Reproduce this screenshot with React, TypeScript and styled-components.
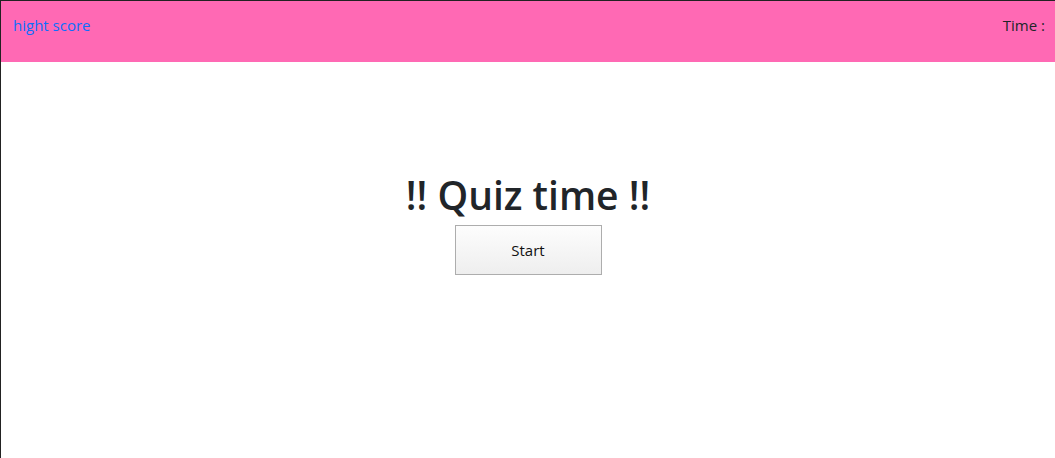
import React from "react";
import styled, { createGlobalStyle } from "styled-components";

const Global = createGlobalStyle`
  html, body { margin: 0; padding: 0; background: #fff; }
  body { font-family: "Open Sans", "Noto Sans", sans-serif; color: #212529; }
`;

const Frame = styled.div`
  width: 1055px;
  height: 458px;
  box-sizing: border-box;
  border-top: 1px solid #222;
  border-left: 1px solid #222;
  display: flex;
  flex-direction: column;
  overflow: hidden;
`;

const Header = styled.header`
  height: 61px;
  background: #ff69b4;
  display: flex;
  align-items: center;
  justify-content: space-between;
  padding: 0 10px 0 12px;
  box-sizing: border-box;
  font-size: 15px;
`;

const HighScore = styled.a`
  color: #0d6efd;
  text-decoration: none;
  margin-top: -14px;
`;

const Timer = styled.span`
  color: #212529;
  margin-top: -14px;
`;

const Main = styled.main`
  display: flex;
  flex-direction: column;
  align-items: center;
  padding-top: 106px;
`;

const Title = styled.h1`
  margin: 0;
  font-size: 39px;
  font-weight: 600;
  line-height: 54px;
  color: #212529;
`;

const StartButton = styled.button`
  width: 147px;
  height: 50px;
  margin-top: 3px;
  border: 1px solid #adadad;
  border-radius: 0;
  background: linear-gradient(#fdfdfd, #eeeeee);
  font-family: inherit;
  font-size: 15px;
  color: #111;
  cursor: pointer;
`;

export default function App() {
  return (
    <>
      <Global />
      <Frame>
        <Header>
          <HighScore href="#">hight score</HighScore>
          <Timer>Time :</Timer>
        </Header>
        <Main>
          <Title>!! Quiz time !!</Title>
          <StartButton>Start</StartButton>
        </Main>
      </Frame>
    </>
  );
}
